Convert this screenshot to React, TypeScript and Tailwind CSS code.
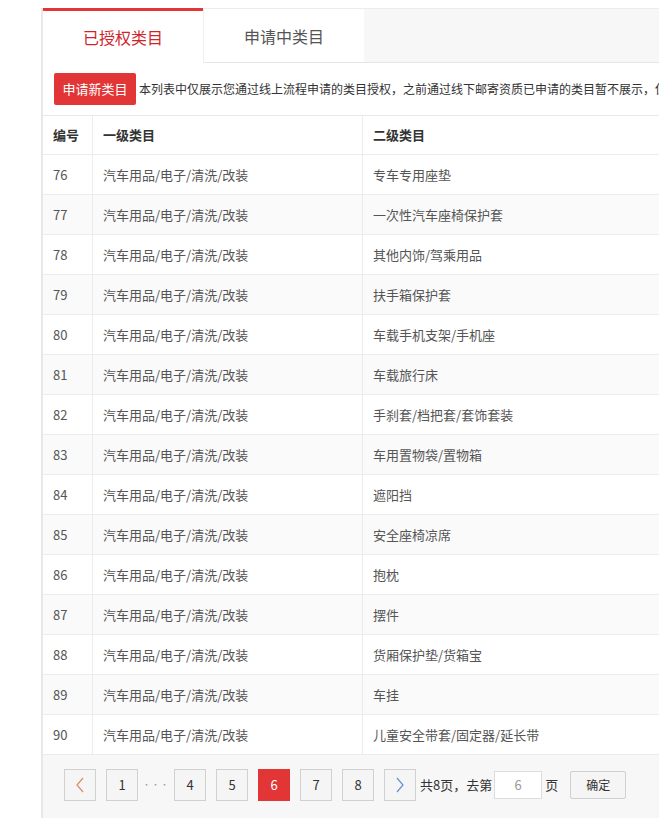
import React from "react";

const rows: [number, string][] = [
  [76, "专车专用座垫"],
  [77, "一次性汽车座椅保护套"],
  [78, "其他内饰/驾乘用品"],
  [79, "扶手箱保护套"],
  [80, "车载手机支架/手机座"],
  [81, "车载旅行床"],
  [82, "手刹套/档把套/套饰套装"],
  [83, "车用置物袋/置物箱"],
  [84, "遮阳挡"],
  [85, "安全座椅凉席"],
  [86, "抱枕"],
  [87, "摆件"],
  [88, "货厢保护垫/货箱宝"],
  [89, "车挂"],
  [90, "儿童安全带套/固定器/延长带"],
];

const pageBtn = "w-8 h-8 flex items-center justify-center border border-[#d0d0d0] bg-[#f5f5f5] text-[13px] text-[#333] shrink-0";

export default function App() {
  return (
    <div className="w-[659px] h-[818px] bg-white overflow-hidden pt-2 pl-[41px]" style={{ fontFamily: '"Microsoft YaHei", "Noto Sans CJK SC", sans-serif' }}>
      <div className="border-l-2 border-[#e8e8e8] h-full w-[700px]">
        <div className="flex h-[55px] bg-[#f7f7f7] border-t border-[#ececec]">
          <div className="w-[160px] bg-white border-t-[3px] border-[#e23535] -mt-px flex items-center justify-center text-[16px] text-[#d0242b]">已授权类目</div>
          <div className="w-[161px] bg-white border-l border-[#eee] border-b border-b-[#e6e6e6] flex items-center justify-center text-[16px] text-[#555]">申请中类目</div>
          <div className="flex-1 border-b border-[#e6e6e6]" />
        </div>
        <div className="h-[53px] flex items-center pl-[11px] border-b border-[#e8e8e8] whitespace-nowrap">
          <div className="w-[82px] h-[32px] bg-[#e23535] rounded-[2px] text-white text-[13px] flex items-center justify-center">申请新类目</div>
          <span className="ml-[3px] text-[12px] text-[#333]">本列表中仅展示您通过线上流程申请的类目授权，之前通过线下邮寄资质已申请的类目暂不展示，但</span>
        </div>
        <div className="flex h-[39px] items-center font-bold text-[13px] text-[#333] border-b border-[#ececec]">
          <div className="w-[50px] pl-[10px] h-full flex items-center border-r border-[#ececec]">编号</div>
          <div className="w-[270px] pl-[10px] h-full flex items-center border-r border-[#ececec]">一级类目</div>
          <div className="pl-[10px]">二级类目</div>
        </div>
        {rows.map(([n, c], i) => (
          <div key={n} className={`flex h-[40px] items-center text-[13px] text-[#555] border-b border-[#ececec] ${i % 2 === 1 ? "bg-[#fafafa]" : "bg-white"}`}>
            <div className="w-[50px] pl-[10px] h-full flex items-center border-r border-[#ececec]">{n}</div>
            <div className="w-[270px] pl-[10px] h-full flex items-center border-r border-[#ececec]">汽车用品/电子/清洗/改装</div>
            <div className="pl-[10px]">{c}</div>
          </div>
        ))}
        <div className="bg-[#f7f7f7] h-[100px] flex items-start pt-[14px] pl-[21px] gap-[10px] text-[13px] text-[#333]">
          <div className={pageBtn}><svg width="10" height="16" viewBox="0 0 10 16"><path d="M8 1 L2 8 L8 15" fill="none" stroke="#e08a6a" strokeWidth="1.2" /></svg></div>
          <div className={pageBtn}>1</div>
          <div className="w-[16px] h-8 flex items-center justify-center text-[#999] text-[8px] tracking-[1px]">···</div>
          <div className={pageBtn}>4</div>
          <div className={pageBtn}>5</div>
          <div className="w-8 h-8 flex items-center justify-center bg-[#e23535] text-white text-[13px] shrink-0">6</div>
          <div className={pageBtn}>7</div>
          <div className={pageBtn}>8</div>
          <div className={pageBtn}><svg width="10" height="16" viewBox="0 0 10 16"><path d="M2 1 L8 8 L2 15" fill="none" stroke="#6a8fd0" strokeWidth="1.2" /></svg></div>
          <div className="flex items-center h-8 -ml-[6px] whitespace-nowrap">
            <span>共8页，去第</span>
            <div className="w-[48px] h-[28px] ml-[2px] bg-white border border-[#ddd] flex items-center justify-center text-[#999]">6</div>
            <span className="ml-[3px]">页</span>
            <div className="ml-[12px] w-[56px] h-[28px] bg-[#f5f5f5] border border-[#d0d0d0] rounded-[2px] flex items-center justify-center text-[12px]">确定</div>
          </div>
        </div>
      </div>
    </div>
  );
}
